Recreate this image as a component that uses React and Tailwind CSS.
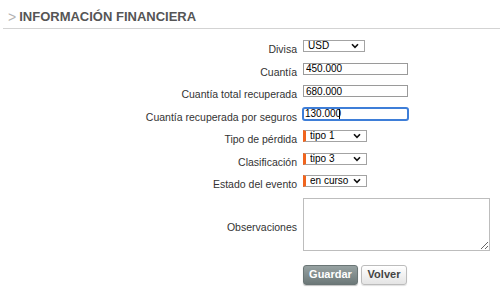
import { useState } from "react";

function Chevron() {
    return (
        <svg width="8" height="6" viewBox="0 0 8 6" className="pointer-events-none absolute right-[6px] top-[3px]">
            <path d="M1 1.2 L4 4.4 L7 1.2" fill="none" stroke="#111" strokeWidth="1.6" />
        </svg>
    );
}

function Select({ value, options, width, required }) {
    return (
        <div className="relative" style={{ width }}>
            <select
                defaultValue={value}
                className={`block appearance-none w-full h-[12px] bg-white border border-[#a3a3a3] text-[10px] leading-[10px] text-black pl-[4px] pr-[14px] py-0 outline-none ${required ? "border-l-[3px] border-l-[#f0641e]" : ""}`}
            >
                {options.map(o => <option key={o}>{o}</option>)}
            </select>
            <Chevron />
        </div>
    );
}

function Row({ label, children }) {
    return (
        <div className="flex h-[22.5px]">
            <div className="w-[297px] text-right text-[10.5px] leading-[12px] pt-[3px] text-[#333]">{label}</div>
            <div className="ml-[6px] flex items-start">{children}</div>
        </div>
    );
}

export default function App() {
    const [cuantia, setCuantia] = useState("450.000");
    const [total, setTotal] = useState("680.000");
    const [seguros, setSeguros] = useState("130.000");

    const inputClass = "block w-[105px] h-[12px] border border-[#9a9a9a] bg-white text-[10px] leading-[10px] text-black px-[2px] py-0 outline-none";

    return (
        <div className="w-[500px] h-[294px] bg-white font-['Liberation_Sans',Arial,sans-serif]">
            {/* Section title */}
            <div className="ml-[3px] pl-[5px] pt-[9px] pb-[3px] border-b border-[#d3d3d3] flex items-center">
                <span className="text-[14px] leading-[16px] text-[#b3b3b3] mr-[3px]">&gt;</span>
                <span className="text-[13px] leading-[16px] font-bold text-[#555]">INFORMACIÓN FINANCIERA</span>
            </div>

            <div className="mt-[11px]">
                <Row label="Divisa">
                    <Select value="USD" options={["USD", "EUR", "COP"]} width={62} />
                </Row>
                <Row label="Cuantía">
                    <input className={inputClass} value={cuantia} onChange={e => setCuantia(e.target.value)} />
                </Row>
                <Row label="Cuantía total recuperada">
                    <input className={inputClass} value={total} onChange={e => setTotal(e.target.value)} />
                </Row>
                <Row label="Cuantía recuperada por seguros">
                    <div className="relative w-[105px] h-[12px]">
                        <input
                            className="block absolute -left-[1px] -top-[1px] w-[107px] h-[14px] border-2 border-[#3e7ed8] rounded-[3px] bg-white text-[10px] leading-[10px] text-black px-[1px] py-0 outline-none"
                            value={seguros}
                            onChange={e => setSeguros(e.target.value)}
                        />
                        <span className="absolute left-[36px] top-[1px] w-px h-[10px] bg-black"></span>
                    </div>
                </Row>
                <Row label="Tipo de pérdida">
                    <Select value="tipo 1" options={["tipo 1", "tipo 2", "tipo 3"]} width={64} required />
                </Row>
                <Row label="Clasificación">
                    <Select value="tipo 3" options={["tipo 1", "tipo 2", "tipo 3"]} width={64} required />
                </Row>
                <Row label="Estado del evento">
                    <Select value="en curso" options={["en curso", "cerrado"]} width={64} required />
                </Row>

                {/* Observaciones */}
                <div className="flex items-center">
                    <div className="w-[297px] text-right text-[10.5px] leading-[12px] pt-[6px] text-[#333]">Observaciones</div>
                    <textarea className="block ml-[6px] w-[187px] h-[53px] border border-[#bdbdbd] bg-white outline-none resize" />
                </div>

                <div className="flex gap-[3px] ml-[303px] mt-[14px]">
                    <button className="w-[55px] h-[20px] rounded-[3px] bg-gradient-to-b from-[#97a2a2] to-[#6c7878] border border-[#6a7575] text-white text-[11px] font-bold shadow-[0_1px_1px_rgba(0,0,0,0.25)]">
                        Guardar
                    </button>
                    <button className="w-[46px] h-[20px] rounded-[3px] bg-gradient-to-b from-[#ffffff] to-[#e4e4e4] border border-[#bcbcbc] text-[#444] text-[11px] font-bold shadow-[0_1px_1px_rgba(0,0,0,0.12)]">
                        Volver
                    </button>
                </div>
            </div>
        </div>
    );
}
